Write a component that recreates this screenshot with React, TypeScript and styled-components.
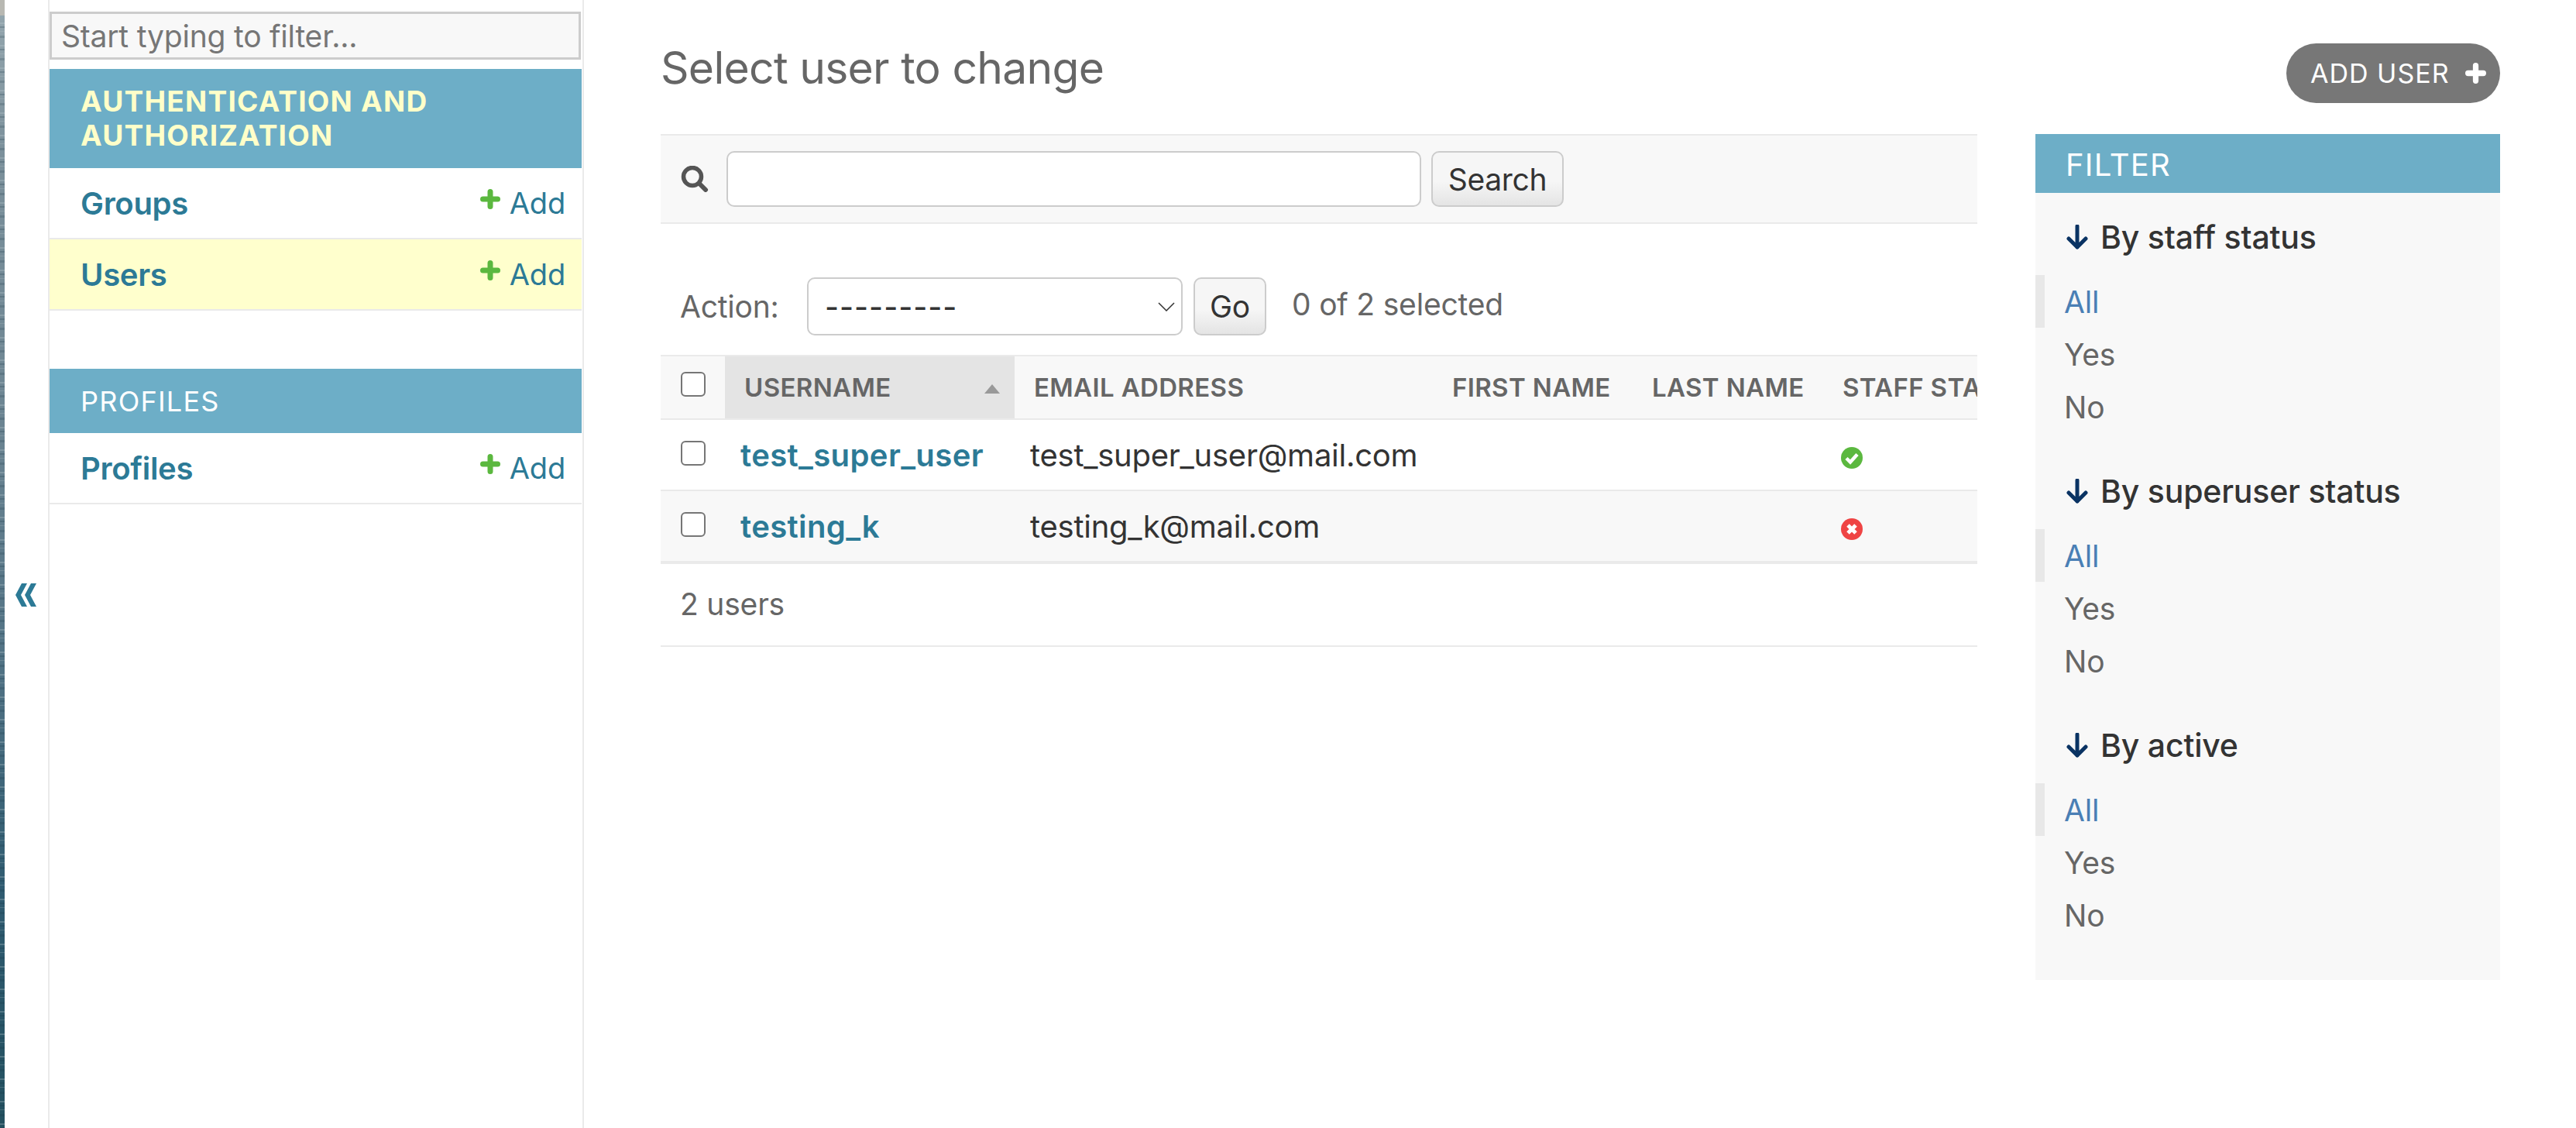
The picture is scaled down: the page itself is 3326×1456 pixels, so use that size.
import styled, { createGlobalStyle } from 'styled-components';

const GlobalStyle = createGlobalStyle`
  html, body {
    margin: 0;
    padding: 0;
    background: #fff;
    overflow: hidden;
  }
  * { box-sizing: border-box; }
  body {
    font-family: Inter, "Liberation Sans", sans-serif;
    color: #333;
  }
`;

const Page = styled.div`
  display: flex;
  width: 3326px;
  height: 1456px;
  overflow: hidden;
`;

// sea photo behind the browser window, only a sliver shows
const Wallpaper = styled.div`
  width: 6px;
  flex: none;
  background:
    linear-gradient(180deg, #b8b8b2 0 20px, transparent 20px),
    repeating-linear-gradient(180deg, rgba(190, 205, 210, .28) 0 2px, transparent 2px 5px, rgba(20, 50, 65, .22) 5px 7px, transparent 7px 11px, rgba(200, 210, 212, .2) 11px 12px, transparent 12px 17px, rgba(15, 45, 60, .18) 17px 20px, transparent 20px 29px),
    linear-gradient(180deg, #93a5ad 20px, #7b909b 200px, #6f8794 500px, #527385 850px, #2f5b70 1150px, #23505f 1456px);
`;

const ToggleColumn = styled.div`
  width: 56px;
  flex: none;
  display: flex;
  align-items: center;
  justify-content: flex-start;
  padding: 80px 0 0 14px;
`;

const Sidebar = styled.nav`
  width: 692px;
  flex: none;
  border-left: 2px solid #eaeaea;
  border-right: 2px solid #eaeaea;
  padding-top: 15px;
`;

const FilterInput = styled.input`
  display: block;
  width: 686px;
  height: 62px;
  margin: 0 0 12px;
  padding: 0 12px;
  background: #f8f8f8;
  border: 3px solid #ccc;
  border-radius: 0;
  font: 400 39px Inter, sans-serif;
  letter-spacing: -.2px;
  outline: none;
  &::placeholder { color: #767676; opacity: 1; }
`;

const AppBlock = styled.div<{ $gap?: boolean }>`
  margin-bottom: ${p => (p.$gap ? '75px' : '0')};
`;

const Caption = styled.div<{ $current?: boolean }>`
  width: 687px;
  background: #6daec7;
  padding: ${p => (p.$current ? '20px 40px 20px' : '20px 40px 19px')};
  font-size: ${p => (p.$current ? '37px' : '36px')};
  line-height: 44px;
  letter-spacing: 1.25px;
  font-weight: ${p => (p.$current ? 700 : 400)};
  color: ${p => (p.$current ? '#ffffc9' : '#fff')};
`;

const ModelRow = styled.div<{ $current?: boolean }>`
  display: flex;
  align-items: center;
  justify-content: space-between;
  width: 687px;
  height: 92px;
  padding: 0 21px 0 40px;
  border-bottom: 2px solid #eaeaea;
  background: ${p => (p.$current ? '#ffffcd' : '#fff')};
`;

const ModelName = styled.a`
  font-size: 40px;
  font-weight: 600;
  letter-spacing: -.3px;
  color: #2c7a96;
`;

const AddLink = styled.a`
  display: flex;
  align-items: center;
  gap: 12px;
  font-size: 38px;
  letter-spacing: -.2px;
  color: #2c7a96;
  svg { margin-top: -10px; }
`;

const Main = styled.main`
  flex: 1;
  min-width: 0;
  padding: 0 98px 0 99px;
`;

const TitleRow = styled.header`
  display: flex;
  align-items: flex-start;
  justify-content: space-between;
  height: 173px;
`;

const Title = styled.h1`
  margin: 52px 0 0;
  font-size: 57px;
  line-height: 72px;
  font-weight: 400;
  letter-spacing: -.7px;
  color: #666;
`;

const AddUserButton = styled.a`
  display: flex;
  align-items: center;
  gap: 20px;
  height: 77px;
  width: 276px;
  margin-top: 56px;
  padding: 0 20px 0 31px;
  border-radius: 39px;
  background: #777;
  color: #fff;
  font-size: 34px;
  letter-spacing: 1px;
  white-space: nowrap;
  svg { flex: none; }
`;

const Columns = styled.div`
  display: flex;
  gap: 75px;
  align-items: flex-start;
`;

const ListColumn = styled.section`
  width: 1700px;
  flex: none;
  overflow: hidden;
`;

const Toolbar = styled.div`
  display: flex;
  align-items: center;
  height: 116px;
  padding: 0 0 0 26px;
  background: #f8f8f8;
  border-top: 2px solid #eaeaea;
  border-bottom: 2px solid #eaeaea;
`;

const SearchField = styled.input`
  width: 897px;
  height: 72px;
  margin: 0 13px 0 23px;
  background: #fff;
  border: 2px solid #ccc;
  border-radius: 10px;
  outline: none;
`;

const PlainButton = styled.button<{ $width: number }>`
  width: ${p => p.$width}px;
  height: 72px;
  padding: 0;
  border: 2px solid #ccc;
  border-radius: 10px;
  background: linear-gradient(180deg, #f6f6f6 0%, #f6f6f6 55%, #e4e4e4 100%);
  color: #333;
  font: 400 39px Inter, sans-serif;
  letter-spacing: -.3px;
`;

const ActionBar = styled.div`
  display: flex;
  align-items: center;
  height: 169px;
  padding: 44px 0 0 25px;
  font-size: 39px;
  color: #666;
`;

const ActionLabel = styled.label`
  width: 164px;
  letter-spacing: -.2px;
`;

const SelectWrap = styled.div`
  position: relative;
  width: 485px;
  height: 75px;
  margin-right: 14px;
  svg {
    position: absolute;
    right: 10px;
    top: 32px;
  }
`;

const ActionSelect = styled.select`
  appearance: none;
  width: 100%;
  height: 100%;
  padding: 0 0 0 21px;
  background: #fff;
  border: 2px solid #ccc;
  border-radius: 10px;
  color: #333;
  font: 500 39px Inter, sans-serif;
  letter-spacing: 1px;
  outline: none;
`;

const GoButton = styled(PlainButton)`
  height: 75px;
`;

const SelectionCount = styled.span`
  margin: -6px 0 0 33px;
  letter-spacing: -.2px;
`;

const Table = styled.table`
  width: 1901px;
  table-layout: fixed;
  border-collapse: separate;
  border-spacing: 0;
  border-top: 2px solid #eaeaea;
`;

const HeadCell = styled.th<{ $sorted?: boolean }>`
  position: relative;
  height: 82px;
  padding: 0 0 0 25px;
  text-align: left;
  font-size: 33px;
  font-weight: 600;
  letter-spacing: .35px;
  white-space: nowrap;
  overflow: hidden;
  color: #666;
  background: ${p => (p.$sorted ? '#e4e4e4' : '#f8f8f8')};
  border-bottom: 2px solid #eaeaea;
`;

const SortArrow = styled.span`
  position: absolute;
  right: 19px;
  top: 36px;
  width: 0;
  height: 0;
  border-left: 10px solid transparent;
  border-right: 10px solid transparent;
  border-bottom: 12px solid #999;
`;

const BodyRow = styled.tr<{ $alt?: boolean; $last?: boolean }>`
  td {
    height: ${p => (p.$last ? '94px' : '92px')};
    background: ${p => (p.$alt ? '#f8f8f8' : '#fff')};
    border-bottom: ${p => (p.$last ? '4px' : '2px')} solid #eaeaea;
  }
`;

const Cell = styled.td`
  padding: 0 0 0 20px;
  font-size: 40px;
  letter-spacing: -.25px;
  white-space: nowrap;
  color: #333;
`;

const CheckCell = styled.td`
  padding: 0 0 4px 26px;
`;

const CheckHeadCell = styled(HeadCell)`
  padding: 0 0 8px 26px;
`;

const Check = styled.input.attrs({ type: 'checkbox' })`
  appearance: none;
  display: block;
  width: 32px;
  height: 32px;
  margin: 0;
  background: #fff;
  border: 2px solid #767676;
  border-radius: 6px;
`;

const UserLink = styled.a`
  font-weight: 600;
  color: #2c7a96;
  letter-spacing: .4px;
`;

const IconCell = styled(Cell)`
  padding: 8px 0 0 23px;
  svg { display: block; }
`;

const Paginator = styled.p`
  display: flex;
  align-items: center;
  height: 107px;
  margin: 0;
  padding: 0 0 2px 25px;
  font-size: 39px;
  letter-spacing: -.2px;
  color: #666;
  border-bottom: 2px solid #eaeaea;
`;

const FilterPanel = styled.aside`
  width: 600px;
  flex: none;
  height: 1092px;
  background: #f8f8f8;
`;

const FilterTitle = styled.h2`
  display: flex;
  align-items: center;
  height: 76px;
  margin: 0;
  padding: 2px 0 0 39px;
  background: #6daec7;
  font-size: 40px;
  font-weight: 400;
  letter-spacing: 1.2px;
  color: #fff;
`;

const FilterGroup = styled.section`
  height: 328px;
  padding-top: 34px;
`;

const FilterHeading = styled.h3`
  display: flex;
  align-items: center;
  gap: 16px;
  height: 46px;
  margin: 0 0 26px 40px;
  font-size: 41px;
  font-weight: 500;
  letter-spacing: -.2px;
  color: #333;
`;

const FilterList = styled.ul`
  list-style: none;
  margin: 0;
  padding: 0;
`;

const FilterItem = styled.li<{ $selected?: boolean }>`
  display: flex;
  align-items: center;
  height: 68px;
  padding: 0 0 0 ${p => (p.$selected ? '25px' : '37px')};
  border-left: ${p => (p.$selected ? '12px solid #e8e8e8' : '0')};
  font-size: 39px;
  letter-spacing: -.2px;
  color: ${p => (p.$selected ? '#4a7fb5' : '#666')};
`;

const Plus = ({ color, size }: { color: string; size: number }) => (
  <svg width={size} height={size} viewBox="0 0 26 26" fill="none">
    <path d="M13 3.5v19M3.5 13h19" stroke={color} strokeWidth="7" strokeLinecap="round" />
  </svg>
);

const ArrowDown = () => (
  <svg width="28" height="32" viewBox="0 0 28 32" fill="none">
    <path d="M14 2v27M3 18l11 11 11-11" stroke="#0a3363" strokeWidth="5" strokeLinecap="round" strokeLinejoin="round" />
  </svg>
);

const SearchIcon = () => (
  <svg width="36" height="34" viewBox="0 0 36 34" fill="none">
    <circle cx="15" cy="14" r="11.5" stroke="#555" strokeWidth="5.5" />
    <path d="M24 23l8 8" stroke="#555" strokeWidth="6" strokeLinecap="round" />
  </svg>
);

const StatusIcon = ({ on }: { on: boolean }) => (
  <svg width="28" height="28" viewBox="0 0 28 28">
    <circle cx="14" cy="14" r="14" fill={on ? '#5bb83f' : '#ef4444'} />
    {on ? (
      <path d="M7 14.5l5 5 9-10" fill="none" stroke="#fff" strokeWidth="4.5" />
    ) : (
      <path d="M9 9l10 10M19 9L9 19" fill="none" stroke="#fff" strokeWidth="5" />
    )}
  </svg>
);

const filters = ['By staff status', 'By superuser status', 'By active'];

const App = () => {
  return (
    <>
      <GlobalStyle />
      <Page>
        <Wallpaper />
        <ToggleColumn>
          <svg width="28" height="30" viewBox="0 0 28 30">
            <path d="M8 0h7L7 15l8 15H8L0 15zM20 0h7l-8 15 8 15h-7L12 15z" fill="#2c7a96" />
          </svg>
        </ToggleColumn>
        <Sidebar>
          <FilterInput placeholder="Start typing to filter..." />
          <AppBlock $gap>
            <Caption $current>AUTHENTICATION AND<br />AUTHORIZATION</Caption>
            <ModelRow>
              <ModelName>Groups</ModelName>
              <AddLink><Plus color="#5bb83f" size={26} />Add</AddLink>
            </ModelRow>
            <ModelRow $current>
              <ModelName>Users</ModelName>
              <AddLink><Plus color="#5bb83f" size={26} />Add</AddLink>
            </ModelRow>
          </AppBlock>
          <AppBlock>
            <Caption>PROFILES</Caption>
            <ModelRow>
              <ModelName>Profiles</ModelName>
              <AddLink><Plus color="#5bb83f" size={26} />Add</AddLink>
            </ModelRow>
          </AppBlock>
        </Sidebar>
        <Main>
          <TitleRow>
            <Title>Select user to change</Title>
            <AddUserButton>ADD USER<Plus color="#fff" size={27} /></AddUserButton>
          </TitleRow>
          <Columns>
            <ListColumn>
              <Toolbar>
                <SearchIcon />
                <SearchField />
                <PlainButton $width={171}>Search</PlainButton>
              </Toolbar>
              <ActionBar>
                <ActionLabel>Action:</ActionLabel>
                <SelectWrap>
                  <ActionSelect defaultValue="">
                    <option value="">---------</option>
                  </ActionSelect>
                  <svg width="22" height="12" viewBox="0 0 22 12" fill="none">
                    <path d="M1 1l10 10L21 1" stroke="#333" strokeWidth="1.5" />
                  </svg>
                </SelectWrap>
                <GoButton $width={94}>Go</GoButton>
                <SelectionCount>0 of 2 selected</SelectionCount>
              </ActionBar>
              <Table>
                <colgroup>
                  <col width="83" />
                  <col width="374" />
                  <col width="540" />
                  <col width="258" />
                  <col width="246" />
                  <col width="400" />
                </colgroup>
                <thead>
                  <tr>
                    <CheckHeadCell><Check /></CheckHeadCell>
                    <HeadCell $sorted>USERNAME<SortArrow /></HeadCell>
                    <HeadCell>EMAIL ADDRESS</HeadCell>
                    <HeadCell>FIRST NAME</HeadCell>
                    <HeadCell>LAST NAME</HeadCell>
                    <HeadCell>STAFF STATUS</HeadCell>
                  </tr>
                </thead>
                <tbody>
                  <BodyRow>
                    <CheckCell><Check /></CheckCell>
                    <Cell><UserLink>test_super_user</UserLink></Cell>
                    <Cell>test_super_user@mail.com</Cell>
                    <Cell />
                    <Cell />
                    <IconCell><StatusIcon on /></IconCell>
                  </BodyRow>
                  <BodyRow $alt $last>
                    <CheckCell><Check /></CheckCell>
                    <Cell><UserLink>testing_k</UserLink></Cell>
                    <Cell>testing_k@mail.com</Cell>
                    <Cell />
                    <Cell />
                    <IconCell><StatusIcon on={false} /></IconCell>
                  </BodyRow>
                </tbody>
              </Table>
              <Paginator>2 users</Paginator>
            </ListColumn>
            <FilterPanel>
              <FilterTitle>FILTER</FilterTitle>
              {filters.map(name => (
                <FilterGroup key={name}>
                  <FilterHeading><ArrowDown />{name}</FilterHeading>
                  <FilterList>
                    <FilterItem $selected>All</FilterItem>
                    <FilterItem>Yes</FilterItem>
                    <FilterItem>No</FilterItem>
                  </FilterList>
                </FilterGroup>
              ))}
            </FilterPanel>
          </Columns>
        </Main>
      </Page>
    </>
  );
};

export default App;
